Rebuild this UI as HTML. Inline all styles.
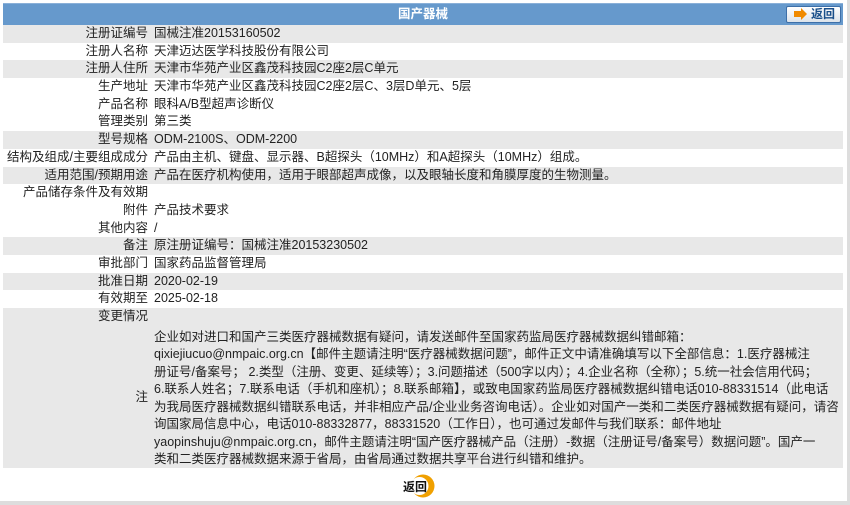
<!DOCTYPE html>
<html><head><meta charset="utf-8"><style>
body{margin:0;width:850px;height:505px;background:#fff;font-family:"Liberation Sans","Noto Sans CJK SC",sans-serif;font-size:12.5px;color:#222;overflow:hidden;position:relative}
#wrap{position:absolute;left:3px;top:3px;width:840px}
.hd{height:21px;background:#6699cc;color:#fff;font-weight:bold;text-align:center;line-height:21px;position:relative;border-top:1px solid #8ab0d8}
.btn{position:absolute;right:2px;top:2px;width:53px;height:15px;border:1px solid #3d6fa8;border-radius:2px;background:linear-gradient(#fff,#dde3ea);color:#1a4f8a;line-height:15px;font-size:12px}
.btn span{position:absolute;left:24px}
.btn i{position:absolute;left:7px;top:4px;width:7px;height:6px;background:#f08a00}
.btn b{position:absolute;left:14px;top:1px;width:0;height:0;border-top:6px solid transparent;border-bottom:6px solid transparent;border-left:6px solid #f08a00}
.r{height:17.7px;line-height:17.7px;display:flex}
.g{background:#e8e8e8}
.l{width:145px;text-align:right;white-space:nowrap;flex:none}
.v{padding-left:6px;white-space:nowrap}
.note{display:flex;background:#e8e8e8;height:142px}
.note .l{line-height:142px}
.note .v{line-height:17.5px;padding-top:3px;width:684px;overflow:hidden}
</style></head><body>
<div id="wrap">
<div class="hd">国产器械<div class="btn"><i></i><b></b><span>返回</span></div></div>
<div class="r g"><div class="l">注册证编号</div><div class="v">国械注准20153160502</div></div>
<div class="r"><div class="l">注册人名称</div><div class="v">天津迈达医学科技股份有限公司</div></div>
<div class="r g"><div class="l">注册人住所</div><div class="v">天津市华苑产业区鑫茂科技园C2座2层C单元</div></div>
<div class="r"><div class="l">生产地址</div><div class="v">天津市华苑产业区鑫茂科技园C2座2层C、3层D单元、5层</div></div>
<div class="r"><div class="l">产品名称</div><div class="v">眼科A/B型超声诊断仪</div></div>
<div class="r"><div class="l">管理类别</div><div class="v">第三类</div></div>
<div class="r g"><div class="l">型号规格</div><div class="v">ODM-2100S、ODM-2200</div></div>
<div class="r"><div class="l">结构及组成/主要组成成分</div><div class="v">产品由主机、键盘、显示器、B超探头（10MHz）和A超探头（10MHz）组成。</div></div>
<div class="r g"><div class="l">适用范围/预期用途</div><div class="v">产品在医疗机构使用，适用于眼部超声成像，以及眼轴长度和角膜厚度的生物测量。</div></div>
<div class="r"><div class="l">产品储存条件及有效期</div><div class="v"></div></div>
<div class="r"><div class="l">附件</div><div class="v">产品技术要求</div></div>
<div class="r"><div class="l">其他内容</div><div class="v">/</div></div>
<div class="r g"><div class="l">备注</div><div class="v">原注册证编号：国械注准20153230502</div></div>
<div class="r"><div class="l">审批部门</div><div class="v">国家药品监督管理局</div></div>
<div class="r g"><div class="l">批准日期</div><div class="v">2020-02-19</div></div>
<div class="r"><div class="l">有效期至</div><div class="v">2025-02-18</div></div>
<div class="r g"><div class="l">变更情况</div><div class="v"></div></div>
<div class="note"><div class="l">注</div><div class="v">企业如对进口和国产三类医疗器械数据有疑问，请发送邮件至国家药监局医疗器械数据纠错邮箱：<br>qixiejiucuo@nmpaic.org.cn【邮件主题请注明“医疗器械数据问题”，邮件正文中请准确填写以下全部信息：1.医疗器械注<br>册证号/备案号； 2.类型（注册、变更、延续等）；3.问题描述（500字以内）；4.企业名称（全称）；5.统一社会信用代码；<br>6.联系人姓名；7.联系电话（手机和座机）；8.联系邮箱】，或致电国家药监局医疗器械数据纠错电话010-88331514（此电话<br>为我局医疗器械数据纠错联系电话，并非相应产品/企业业务咨询电话）。企业如对国产一类和二类医疗器械数据有疑问，请咨<br>询国家局信息中心，电话010-88332877，88331520（工作日），也可通过发邮件与我们联系：邮件地址<br>yaopinshuju@nmpaic.org.cn，邮件主题请注明“国产医疗器械产品（注册）-数据（注册证号/备案号）数据问题”。国产一<br>类和二类医疗器械数据来源于省局，由省局通过数据共享平台进行纠错和维护。</div></div>
</div>
<svg style="position:absolute;left:410px;top:474px" width="26" height="26"><circle cx="13" cy="12" r="11.5" fill="#f0a000"/><circle cx="9.5" cy="12" r="9" fill="#fff"/></svg>
<div style="position:absolute;left:403px;top:478px;font-weight:bold;color:#111;font-size:12px">返回</div>
<div style="position:absolute;left:0;top:501px;width:850px;height:4px;background:#ddd"></div>
<div style="position:absolute;left:847px;top:0;width:3px;height:505px;background:#ddd"></div>
</body></html>
